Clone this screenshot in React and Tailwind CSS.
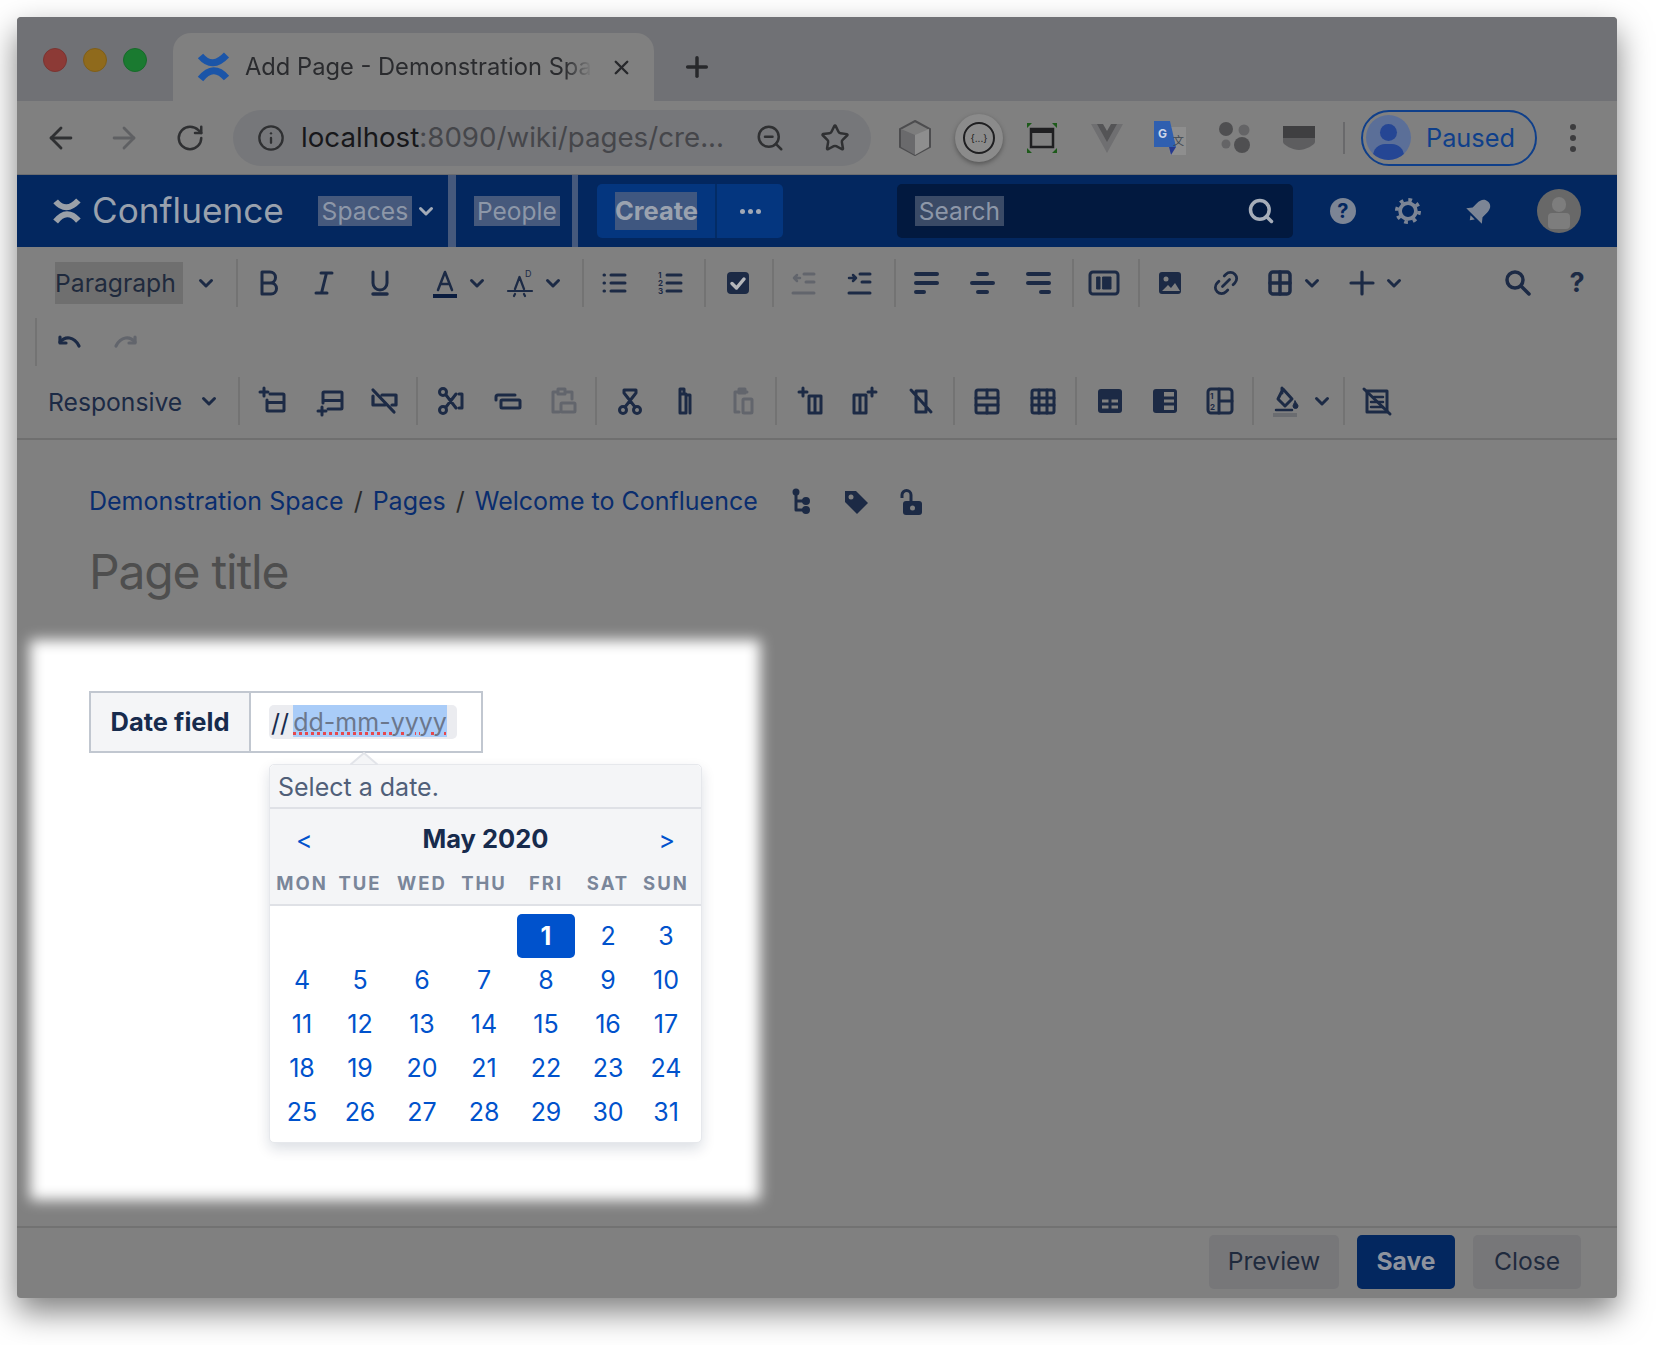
import { Link2, RotateCw, ArrowLeft, ArrowRight, Plus, X, Search, Star, Info, ZoomOut } from 'lucide-react';

const ink = '#1c2a45';
const faded = '#62656c';
const navIcon = '#7c8595';

const I = ({ children, dim, sw = 3, fill = 'none' }) => (
  <svg viewBox="0 0 32 32" className="w-8 h-8" fill={fill} stroke={dim ? faded : ink} strokeWidth={sw} strokeLinecap="round" strokeLinejoin="round">
    {children}
  </svg>
);

const Btn = ({ children, className = '' }) => (
  <div className={`w-14 h-12 flex items-center justify-center shrink-0 ${className}`}>{children}</div>
);

const Sep = ({ className = '' }) => <div className={`w-[2px] h-12 bg-[#737373] shrink-0 ${className}`} />;

const Chev = ({ color = ink, className = '' }) => (
  <svg viewBox="0 0 20 20" className={`w-5 h-5 shrink-0 ${className}`} fill="none" stroke={color} strokeWidth="3" strokeLinecap="round" strokeLinejoin="round">
    <path d="M4.5 7.5 10 13l5.5-5.5" />
  </svg>
);

const Split = ({ children, className = '' }) => (
  <div className={`flex items-center h-12 shrink-0 ${className}`}>
    <div className="w-11 flex justify-center">{children}</div>
    <Chev />
  </div>
);

const Bars = ({ d, dim }) => <I dim={dim} sw={4}><path d={d} /></I>;

const ConfluenceMark = ({ color, className }) => (
  <svg viewBox="0 0 32 32" className={className} fill="none" stroke={color} strokeWidth="7">
    <path d="M3 5Q15 19 29 4" />
    <path d="M3 28Q16 12 29 27" />
  </svg>
);

const days = [
  ['', '', '', '', '1', '2', '3'],
  ['4', '5', '6', '7', '8', '9', '10'],
  ['11', '12', '13', '14', '15', '16', '17'],
  ['18', '19', '20', '21', '22', '23', '24'],
  ['25', '26', '27', '28', '29', '30', '31'],
];

const weekdays = ['MON', 'TUE', 'WED', 'THU', 'FRI', 'SAT', 'SUN'];

const TabBar = () => (
  <div className="h-[84px] bg-[#707175] flex shrink-0 pl-[26px] rounded-t-[4px]">
    <div className="flex items-center gap-4 h-[86px]">
      <div className="w-6 h-6 rounded-full bg-[#8c3a36] border border-[#7a3431]" />
      <div className="w-6 h-6 rounded-full bg-[#8f6a1c] border border-[#7f5e19]" />
      <div className="w-6 h-6 rounded-full bg-[#1a7a30] border border-[#176a2a]" />
    </div>
    <div className="ml-[26px] mt-4 w-[481px] h-[68px] bg-[#808080] rounded-t-[18px] flex items-center pl-6">
      <ConfluenceMark color="#1b55a8" className="w-[33px] h-[32px] shrink-0" />
      <span className="ml-[15px] w-[347px] text-[23.700px] text-[#2a2b2e] whitespace-nowrap overflow-hidden [mask-image:linear-gradient(to_right,black_92%,transparent)]">
        Add Page - Demonstration Spa
      </span>
      <X className="ml-[18px] w-[23px] h-[23px] text-[#27282b]" strokeWidth={2.5} />
    </div>
    <Plus className="ml-[27px] mt-[34px] w-8 h-8 text-[#27282b]" strokeWidth={2.6} />
  </div>
);

const UrlBar = () => (
  <div className="h-[74px] bg-[#808080] border-b border-[#6c6d70] flex items-center shrink-0">
    <ArrowLeft className="ml-[27px] w-[34px] h-[34px] text-[#2f3032]" strokeWidth={2} />
    <ArrowRight className="ml-[29px] w-[34px] h-[34px] text-[#5f6063]" strokeWidth={2} />
    <RotateCw className="ml-[34px] w-[30px] h-[30px] text-[#2f3032]" strokeWidth={2} />
    <div className="ml-[28px] w-[638px] h-14 rounded-full bg-[#76777a] flex items-center pl-[24px] shrink-0">
      <Info className="w-[28px] h-[28px] text-[#2f3032]" strokeWidth={2} />
      <span className="ml-[16px] w-[421px] text-[27.700px] text-[#45464a] whitespace-nowrap"><span className="text-[#17171a]">localhost</span>:8090/wiki/pages/cre...</span>
      <ZoomOut className="ml-[33px] w-[30px] h-[30px] text-[#2f3032] shrink-0" strokeWidth={2} />
      <Star className="ml-[35px] w-[30px] h-[30px] text-[#2f3032] shrink-0" strokeWidth={2} />
    </div>
    <svg viewBox="0 0 34 36" className="ml-[27px] w-[34px] h-[36px] shrink-0">
      <path d="M17 1 32 9v18l-15 8-15-8V9Z" fill="#7d7d7d" stroke="#4d4d4f" strokeWidth="2" />
      <path d="M17 15 31 9v18l-14 8Z" fill="#8e8e8e" />
      <path d="M3 9l14 6v20L3 27Z" fill="#6a6a6c" />
    </svg>
    <div className="ml-[23px] w-12 h-12 rounded-full bg-[#8b8b8b] shadow-[0_2px_5px_rgba(0,0,0,0.35)] flex items-center justify-center shrink-0">
      <div className="w-8 h-8 rounded-full border-2 border-[#1f1f21] flex items-center justify-center text-[10px] leading-none text-[#1f1f21]">{'{...}'}</div>
    </div>
    <svg viewBox="0 0 32 32" className="ml-[23px] w-8 h-8 shrink-0" fill="none">
      <path d="M1 1h5L1 6ZM31 1h-5l5 5ZM1 31h5l-5-5ZM31 31h-5l5-5Z" fill="#1d5a1a" />
      <rect x="5" y="7" width="22" height="18" stroke="#1f1f21" strokeWidth="2.500" />
      <path d="M5 9h22" stroke="#1f1f21" strokeWidth="4" />
    </svg>
    <svg viewBox="0 0 32 30" className="ml-[33px] w-8 h-[30px] shrink-0">
      <path d="M0 1h10l6 11 6-11h10L16 30Z" fill="#6f6f71" />
      <path d="M6 1h6l4 7 4-7h6L16 19Z" fill="#545456" />
    </svg>
    <svg viewBox="0 0 32 34" className="ml-[31px] w-8 h-[34px] shrink-0">
      <path d="M14 6h18v28H16Z" fill="#8e8e8e" />
      <path d="M0 0h16l6 26H0Z" fill="#2f5fb0" />
      <path d="M15 26h7l-5 8Z" fill="#26398f" />
      <text x="4" y="17" fontSize="12" fontWeight="700" fill="#cdd6e8" fontFamily="Inter, sans-serif">G</text>
      <text x="19" y="24" fontSize="11" fill="#3d4650" fontFamily="'Noto Sans CJK SC', sans-serif">文</text>
    </svg>
    <svg viewBox="0 0 32 32" className="ml-[33px] w-8 h-8 shrink-0" fill="#4f4f51">
      <circle cx="7" cy="7" r="7" />
      <circle cx="25" cy="8" r="5.500" fill="#646466" />
      <circle cx="7" cy="22" r="4.500" fill="#646466" />
      <circle cx="23" cy="23" r="8" />
    </svg>
    <svg viewBox="0 0 32 24" className="ml-[32px] w-8 h-6 shrink-0">
      <path d="M0 0h32v12H0Z" fill="#3f3f41" />
      <path d="M0 12h32v4c0 3-10 8-16 8S0 19 0 16Z" fill="#5d5d5f" />
    </svg>
    <div className="ml-[28px] w-[2px] h-[32px] bg-[#69696b] shrink-0" />
    <div className="ml-[16px] w-[176px] h-14 rounded-full border-2 border-[#0f3f8a] flex items-center pl-[3px] shrink-0">
      <div className="relative w-[45px] h-[45px] rounded-full bg-[#5b6f98] overflow-hidden shrink-0">
        <div className="absolute left-[14px] top-[9px] w-[17px] h-[17px] rounded-full bg-[#254694]" />
        <div className="absolute left-[7px] top-[29px] w-[31px] h-[24px] rounded-full bg-[#254694]" />
      </div>
      <span className="ml-[15px] text-[25.300px] text-[#0f3f8a]">Paused</span>
    </div>
    <div className="ml-[33px] flex flex-col gap-[5px] shrink-0">
      <div className="w-[6px] h-[6px] rounded-full bg-[#3c3c3e]" />
      <div className="w-[6px] h-[6px] rounded-full bg-[#3c3c3e]" />
      <div className="w-[6px] h-[6px] rounded-full bg-[#3c3c3e]" />
    </div>
  </div>
);

const NavBar = () => (
  <div className="h-[72px] bg-[#03275f] flex items-stretch shrink-0 text-[#8d97a8]">
    <div className="flex items-center ml-[36px]">
      <ConfluenceMark color="#9aa0a8" className="w-[28px] h-[28px]" />
      <span className="ml-[11px] text-[35.200px] text-[#99a1ad] leading-none">Confluence</span>
    </div>
    <div className="flex items-center ml-[34px]">
      <span className="h-[30px] w-[94px] bg-[#46597c] text-[24.700px] leading-[30px] text-center">Spaces</span>
      <Chev color="#a4acb8" className="ml-[4px]" />
    </div>
    <div className="ml-[12px] w-2 bg-[#46597c]" />
    <div className="flex items-center ml-[18px]">
      <span className="h-[30px] w-[86px] bg-[#46597c] text-[24.500px] leading-[30px] text-center">People</span>
    </div>
    <div className="ml-[12px] w-[6px] bg-[#46597c]" />
    <div className="flex items-center ml-[19px]">
      <div className="w-[186px] h-[54px] rounded-[5px] bg-[#04367f] flex items-center">
        <div className="ml-[18px] w-[82px] h-[38px] bg-[#3f5780] text-[25.500px] leading-[38px] font-bold text-center text-[#9aa2af]">Create</div>
        <div className="ml-[18px] w-[2px] h-full bg-[#032c66]" />
        <div className="ml-[23px] flex gap-[3px]">
          <div className="w-[5px] h-[5px] rounded-full bg-[#a0a8b6]" />
          <div className="w-[5px] h-[5px] rounded-full bg-[#a0a8b6]" />
          <div className="w-[5px] h-[5px] rounded-full bg-[#a0a8b6]" />
        </div>
      </div>
    </div>
    <div className="flex items-center ml-[114px]">
      <div className="w-[396px] h-[54px] rounded-[5px] bg-[#02193f] flex items-center pl-[18px]">
        <span className="w-[89px] h-[30px] bg-[#3a4a66] text-[24.500px] leading-[30px] text-center text-[#8d97a8]">Search</span>
        <Search className="ml-[243px] w-[28px] h-[28px] text-[#a6adb9]" strokeWidth={3} />
      </div>
    </div>
    <div className="flex items-center ml-[37px]">
      <div className="w-[26px] h-[26px] rounded-full bg-[#7c8595] text-[#03275f] text-[20px] font-bold leading-[26px] text-center">?</div>
      <svg viewBox="0 0 28 28" className="ml-[39px] w-[26px] h-[26px]" fill="none" stroke={navIcon}>
        <circle cx="14" cy="14" r="8.500" strokeWidth="4" />
        <circle cx="14" cy="14" r="12" strokeWidth="4" strokeDasharray="4 5.420" />
      </svg>
      <svg viewBox="0 0 28 28" className="ml-[44px] w-[28px] h-[28px]" fill={navIcon}>
        <g transform="rotate(45 14 14)">
          <path d="M14 1c-5 0-7 4-7 9v6l-4 5h22l-4-5v-6c0-5-2-9-7-9Z" />
          <path d="M11 23h6l-3 4Z" />
        </g>
      </svg>
      <div className="relative ml-[44px] w-11 h-11 rounded-full bg-[#686868] overflow-hidden">
        <div className="absolute left-[15px] top-[8px] w-[14px] h-[15px] rounded-full bg-[#7d7d7d]" />
        <div className="absolute left-[11px] top-[24px] w-[22px] h-[16px] rounded-[4px] bg-[#7d7d7d]" />
      </div>
    </div>
  </div>
);

const EditorToolbar = () => (
  <div className="h-[193px] bg-[#808080] border-b-2 border-[#6f6f6f] shrink-0 flex flex-col">
    <div className="h-[70px] flex items-center pt-[2px] pr-3">
      <div className="ml-[38px] w-32 h-[42px] bg-[#6f6f6f] text-[24.700px] leading-[42px] text-[#1f2a3d] shrink-0">Paragraph</div>
      <Chev className="ml-[13px]" />
      <Sep className="ml-5" />
      <Btn className="ml-[2px]"><I><path d="M10 5h8a5 5 0 0 1 0 11h-8zM10 16h9a5.500 5.500 0 0 1 0 11h-9z" /></I></Btn>
      <Btn><I><path d="M13 6h11M8 26h11M18.500 6l-5 20" /></I></Btn>
      <Btn><I><path d="M9 5v11a7 7 0 0 0 14 0V5" /><path d="M9 27h14" strokeWidth="3.500" /></I></Btn>
      <Split className="ml-[15px]">
        <I sw={2.500}><path d="M9 23 16 5l7 18M11.500 17h9" /><path d="M4 29h24" stroke="#0b1d3f" strokeWidth="4" strokeLinecap="butt" /></I>
      </Split>
      <Split className="ml-3">
        <I sw={2.200}>
          <path d="M10 22 14.500 10 19 22M3 24h24M9 29l1-2M20 29l-1-2" />
          <text x="20" y="10" fontSize="9" fill={ink} stroke="none" fontFamily="Inter, sans-serif">D</text>
        </I>
      </Split>
      <Sep className="ml-[19px]" />
      <Btn className="ml-[3px]"><I sw={3}><path d="M12 8h14M12 16h14M12 24h14M5 8h.5M5 16h.5M5 24h.5" /></I></Btn>
      <Btn>
        <I sw={3}>
          <path d="M12 8h14M12 16h14M12 24h14" />
          <text x="3" y="11" fontSize="8" fill={ink} stroke="none" fontFamily="Inter, sans-serif" fontWeight="700">1</text>
          <text x="3" y="19" fontSize="8" fill={ink} stroke="none" fontFamily="Inter, sans-serif" fontWeight="700">2</text>
          <text x="3" y="27" fontSize="8" fill={ink} stroke="none" fontFamily="Inter, sans-serif" fontWeight="700">3</text>
        </I>
      </Btn>
      <Sep className="ml-[5px]" />
      <Btn className="ml-1">
        <svg viewBox="0 0 32 32" className="w-8 h-8"><rect x="5" y="5" width="22" height="22" rx="4" fill={ink} /><path d="M10 16.500 14.500 21 22 12" fill="none" stroke="#b5b7ba" strokeWidth="3.500" strokeLinecap="round" strokeLinejoin="round" /></svg>
      </Btn>
      <Sep className="ml-[6px]" />
      <Btn className="ml-[2px]"><I dim><path d="M16 7h10M18 15h8M5 26h21" /><path d="M12 11H6M9 8l-3 3 3 3" strokeWidth="2.500" /></I></Btn>
      <Btn><I><path d="M16 7h10M18 15h8M5 26h21" /><path d="M5 11h7M9 8l3 3-3 3" strokeWidth="2.500" /></I></Btn>
      <Sep className="ml-[6px]" />
      <Btn className="ml-[2px]"><Bars d="M6 7h21M6 16h21M6 25h8" /></Btn>
      <Btn><Bars d="M12 7h9M6 16h21M12 25h9" /></Btn>
      <Btn><Bars d="M6 7h21M6 16h21M19 25h8" /></Btn>
      <Sep className="ml-[6px]" />
      <Btn className="ml-[2px]">
        <I><rect x="2" y="5" width="28" height="22" rx="3" /><rect x="9" y="10" width="3" height="12" fill={ink} strokeWidth="1" /><rect x="15" y="10" width="8" height="12" fill={ink} strokeWidth="1" /></I>
      </Btn>
      <Sep className="ml-[6px]" />
      <Btn className="ml-[2px]">
        <svg viewBox="0 0 32 32" className="w-8 h-8"><rect x="5" y="5" width="22" height="22" rx="3" fill={ink} /><circle cx="12" cy="12" r="2.500" fill="#808080" /><path d="M8 24l6-6 3 3 4-5 5 8Z" fill="#808080" /></svg>
      </Btn>
      <Btn><Link2 className="w-[30px] h-[30px] -rotate-45" color={ink} strokeWidth={2.2} /></Btn>
      <Split className="ml-1">
        <I sw={3.500}><rect x="6" y="5" width="20" height="22" rx="3" /><path d="M16 5v22M6 16h20" /></I>
      </Split>
      <div className="ml-[18px] flex items-center shrink-0">
        <div className="w-[44px] flex justify-center"><I sw={3.200}><path d="M16 5v22M5 16h22" /></I></div>
        <Chev />
      </div>
      <Btn className="ml-auto"><I sw={3.500}><circle cx="13" cy="13" r="8" /><path d="M19 19l8 8" /></I></Btn>
      <Btn className="ml-[3px] text-[27px] font-bold text-[#1c2a45]">?</Btn>
    </div>
    <div className="h-12 flex items-center mt-[1px]">
      <Sep className="ml-[18px]" />
      <Btn className="ml-[5px] pt-2"><I sw={3.200}><path d="M6 12c5-6 14-6 19 4" /><path d="M6 7v6h6" /></I></Btn>
      <Btn className="-ml-[1px] pt-2"><I dim sw={3.200}><path d="M26 12c-5-6-14-6-19 4" /><path d="M26 7v6h-6" /></I></Btn>
    </div>
    <div className="h-12 flex items-center mt-[11px]">
      <span className="ml-[31px] w-[134px] text-[24.700px] pt-[3px] text-[#1c2a45] shrink-0">Responsive</span>
      <Chev className="ml-[17px]" />
      <Sep className="ml-[19px]" />
      <Btn className="ml-[5px]"><I><path d="M13 9h13a1 1 0 0 1 1 1v15a1 1 0 0 1-1 1H11a1 1 0 0 1-1-1V15M10 17.500h17" /><path d="M7 3v8M3 7h8" /></I></Btn>
      <Btn className="ml-[1px]"><I><path d="M9 18V8a1 1 0 0 1 1-1h17a1 1 0 0 1 1 1v15a1 1 0 0 1-1 1H14M9 15.500h19" /><path d="M8 22v8M4 26h8" /></I></Btn>
      <Btn className="-ml-[2px]"><I sw={3.200}><path d="M5 11v9h12M14 10h14v10h-4M5 5l21 22" /></I></Btn>
      <Sep className="ml-[4px]" />
      <Btn className="ml-[5px]"><I sw={3}><circle cx="8" cy="7" r="3.500" /><circle cx="8" cy="25" r="3.500" /><path d="M11 10l10 13M11 22 21 9M24 9h3v14h-3" /></I></Btn>
      <Btn><I sw={3}><path d="M5 15v-3a2 2 0 0 1 2-2h17" /><rect x="10" y="15" width="19" height="8" rx="1" /></I></Btn>
      <Btn className="-ml-[1px]"><I dim><path d="M12 7H7v20h6M21 7h5v7M12 4h7v5h-7Z" /><rect x="15" y="18" width="14" height="9" rx="1" /></I></Btn>
      <Sep className="ml-[5px]" />
      <Btn className="ml-[5px]"><I sw={3}><circle cx="9" cy="25" r="3.500" /><circle cx="23" cy="25" r="3.500" /><path d="M11 22 22 8M21 22 10 8M10 8V5h12v3" /></I></Btn>
      <Btn><I><path d="M14 8V4h-4v24h6V9h-6M16 10h4v18" /></I></Btn>
      <Btn className="ml-[1px]"><I dim><path d="M8 7h12M8 7v20h4M12 4h6v4h-6Z" /><rect x="16" y="14" width="9" height="14" rx="1" /></I></Btn>
      <Sep className="ml-[4px]" />
      <Btn className="ml-[6px]"><I><path d="M14 11h12v17H14ZM20 11v17" /><path d="M8 3v8M4 7h8" /></I></Btn>
      <Btn className="-ml-[3px]"><I><path d="M6 10h12v18H6ZM12 10v18" /><path d="M24 3v8M20 7h8" /></I></Btn>
      <Btn className="ml-[1px]"><I><path d="M11 6h10v21H11ZM6 5l20 22" /></I></Btn>
      <Sep className="ml-[4px]" />
      <Btn className="ml-[4px]"><I><rect x="5" y="5" width="22" height="23" rx="2" /><path d="M5 13h22M5 20h22M16 5v8M16 20v8" /></I></Btn>
      <Btn><I><rect x="5" y="5" width="22" height="23" rx="2" /><path d="M5 13h22M5 20h22M12 5v23M20 5v23" /></I></Btn>
      <Sep className="ml-[4px]" />
      <Btn className="ml-[5px]">
        <svg viewBox="0 0 32 32" className="w-8 h-8"><rect x="4" y="4" width="24" height="24" rx="3" fill={ink} /><path d="M8 16h6.500M17.500 16H24M8 22h6.500M17.500 22H24" stroke="#808080" strokeWidth="3" /></svg>
      </Btn>
      <Btn className="-ml-[1px]">
        <svg viewBox="0 0 32 32" className="w-8 h-8"><rect x="4" y="4" width="24" height="24" rx="3" fill={ink} /><rect x="15" y="7" width="10" height="18" fill="#808080" /><path d="M15 13h10M15 19h10" stroke={ink} strokeWidth="3" /></svg>
      </Btn>
      <Btn className="-ml-[1px]">
        <I><rect x="4" y="4" width="24" height="24" rx="3" /><path d="M15 4v24M15 16h13" /><text x="6" y="14" fontSize="8" fill={ink} stroke="none" fontFamily="Inter, sans-serif" fontWeight="700">1</text><text x="6" y="25" fontSize="8" fill={ink} stroke="none" fontFamily="Inter, sans-serif" fontWeight="700">2</text></I>
      </Btn>
      <Sep className="ml-[4px]" />
      <Btn className="ml-[4px]">
        <svg viewBox="0 0 32 32" className="w-8 h-8" fill="none" stroke={ink} strokeWidth="3" strokeLinejoin="round" strokeLinecap="round">
          <path d="M13 4l9 10-7 7-7-7ZM12 8V3" />
          <path d="M25 16c2 3 3 4 3 5a2.500 2.500 0 0 1-5 0c0-1 1-2 2-5Z" fill={ink} strokeWidth="1" />
          <path d="M6 25h16" strokeWidth="2.500" />
          <path d="M3 30h24" stroke="#6a6c70" strokeWidth="4" strokeLinecap="butt" />
        </svg>
      </Btn>
      <Chev className="ml-[-2px]" />
      <Sep className="ml-[11px]" />
      <Btn className="ml-[4px]"><I><path d="M6 6h20v21H6Z" /><path d="M13 12h9M10 17h12M10 22h12" strokeWidth="2.500" /><path d="M3 4l26 25" /></I></Btn>
    </div>
  </div>
);

const Calendar = () => (
  <div className="relative ml-[239px] mt-[11px] w-[433px] h-[379px] rounded-[5px] bg-white border border-[#e6e8ec] shadow-[0_6px_14px_rgba(9,30,66,0.14)]">
    <svg viewBox="0 0 28 13" className="absolute left-[80px] -top-[13px] w-7 h-[13px]">
      <path d="M0 13 14 1l14 12Z" fill="#f4f5f7" stroke="#e2e4e9" strokeWidth="2" />
    </svg>
    <div className="h-[44px] bg-[#f4f5f7] rounded-t-[5px] border-b-2 border-[#dfe1e6] pl-[8px] text-[25px] leading-[44px] text-[#505f79]">Select a date.</div>
    <div className="h-[97px] bg-[#f4f5f7] border-b-2 border-[#dfe1e6] flex flex-col">
      <div className="h-[60px] flex items-center justify-between px-[26px]">
        <span className="text-[#0052cc] text-[25px] pt-[4px]">&lt;</span>
        <span className="text-[#172b4d] text-[25.500px] font-bold">May 2020</span>
        <span className="text-[#0052cc] text-[25px] pt-[4px]">&gt;</span>
      </div>
      <div className="grid grid-cols-[54px_62px_62px_62px_62px_62px_54px] pl-[5px]">
        {weekdays.map((d) => (
          <div key={d} className="text-center text-[18.500px] leading-[28px] font-bold tracking-[2px] text-[#7a869a]">{d}</div>
        ))}
      </div>
    </div>
    <div className="grid grid-cols-[54px_62px_62px_62px_62px_62px_54px] pl-[5px] pt-[8px]">
      {days.flat().map((d, i) => (
        d === '1'
          ? <div key={i} className="mx-[2px] h-11 rounded-[5px] bg-[#0052cc] text-white font-bold text-[25px] leading-[44px] text-center">{d}</div>
          : <div key={i} className="h-11 text-[#0052cc] text-[25px] leading-[44px] text-center">{d}</div>
      ))}
    </div>
  </div>
);

const Spotlight = () => (
  <div className="relative ml-[13px] mt-[36px] w-[730px] h-[560px]">
    <div className="absolute inset-0 bg-white blur-[7px]" />
    <div className="relative pt-[51px]">
      <div className="ml-[59px] w-[394px] h-[62px] border-2 border-[#c1c7d0] bg-white flex">
        <div className="w-[160px] bg-[#f4f5f7] border-r-2 border-[#c1c7d0] flex items-center justify-center text-[25.500px] font-bold text-[#172b4d]">Date field</div>
        <div className="flex items-center pl-[18px]">
          <div className="w-[188px] h-[34px] rounded-[5px] bg-[#ebecf0] flex pl-[2px] text-[25px] leading-[34px] text-[#172b4d]">
            <span className="mt-[1px]">//</span>
            <span className="ml-[4px] w-[154px] h-[32px] bg-[#a9ccf8] text-[#6b778c] text-center whitespace-nowrap underline decoration-dotted decoration-[#e5484d] decoration-[3px] underline-offset-[1px]">dd-mm-yyyy</span>
          </div>
        </div>
      </div>
      <Calendar />
    </div>
  </div>
);

export default function App() {
  return (
    <div className="w-[1665px] h-[1345px] bg-white pt-[17px] pl-[17px] font-['Inter','Noto_Sans',sans-serif] overflow-hidden">
      <div className="w-[1600px] h-[1281px] flex flex-col bg-[#808080] rounded-[4px] shadow-[0_14px_32px_rgba(0,0,0,0.5)] overflow-hidden">
        <TabBar />
        <UrlBar />
        <NavBar />
        <EditorToolbar />
        <div className="flex-1 min-h-0">
          <div className="flex items-center h-12 mt-[38px] ml-[72px] text-[25px] text-[#0a2d6e]">
            <span>Demonstration Space</span>
            <span className="mx-[10px] text-[#2b2b2b]">/</span>
            <span>Pages</span>
            <span className="mx-[10px] text-[#2b2b2b]">/</span>
            <span>Welcome to Confluence</span>
            <div className="ml-[27px] flex gap-[23px] text-[#1c2a45]">
              <I sw={3}><path d="M11 6v18h8M11 15h8" /><circle cx="11" cy="6" r="2" fill={ink} /><circle cx="21" cy="15" r="2.500" fill={ink} /><circle cx="21" cy="24" r="2.500" fill={ink} /></I>
              <svg viewBox="0 0 32 32" className="w-8 h-8"><path d="M5 5h11l12 12-11 11L5 16Z" fill={ink} /><circle cx="11" cy="11" r="2.500" fill="#808080" /></svg>
              <svg viewBox="0 0 32 32" className="w-8 h-8" fill="none"><rect x="8" y="15" width="19" height="14" rx="3" fill={ink} /><circle cx="17.500" cy="22" r="2.500" fill="#808080" /><path d="M7 12V9a4.500 4.500 0 0 1 9 0v6" stroke={ink} strokeWidth="3" /></svg>
            </div>
          </div>
          <div className="ml-[72px] mt-[14px] h-[64px] text-[48px] tracking-[-1.200px] leading-[64px] text-[#4e4e4e]">Page title</div>
          <Spotlight />
        </div>
        <div className="h-[72px] border-t-2 border-[#727272] flex items-start justify-end gap-[18px] pt-[7px] pr-[36px] shrink-0 text-[24.700px]">
          <div className="w-[130px] h-[54px] rounded-[5px] bg-[#777779] text-[#1f2a3d] text-center leading-[52px]">Preview</div>
          <div className="w-[98px] h-[54px] rounded-[5px] bg-[#03275f] text-[#8d939e] font-bold text-center leading-[52px]">Save</div>
          <div className="w-[108px] h-[54px] rounded-[5px] bg-[#777779] text-[#1f2a3d] text-center leading-[52px]">Close</div>
        </div>
      </div>
    </div>
  );
}
